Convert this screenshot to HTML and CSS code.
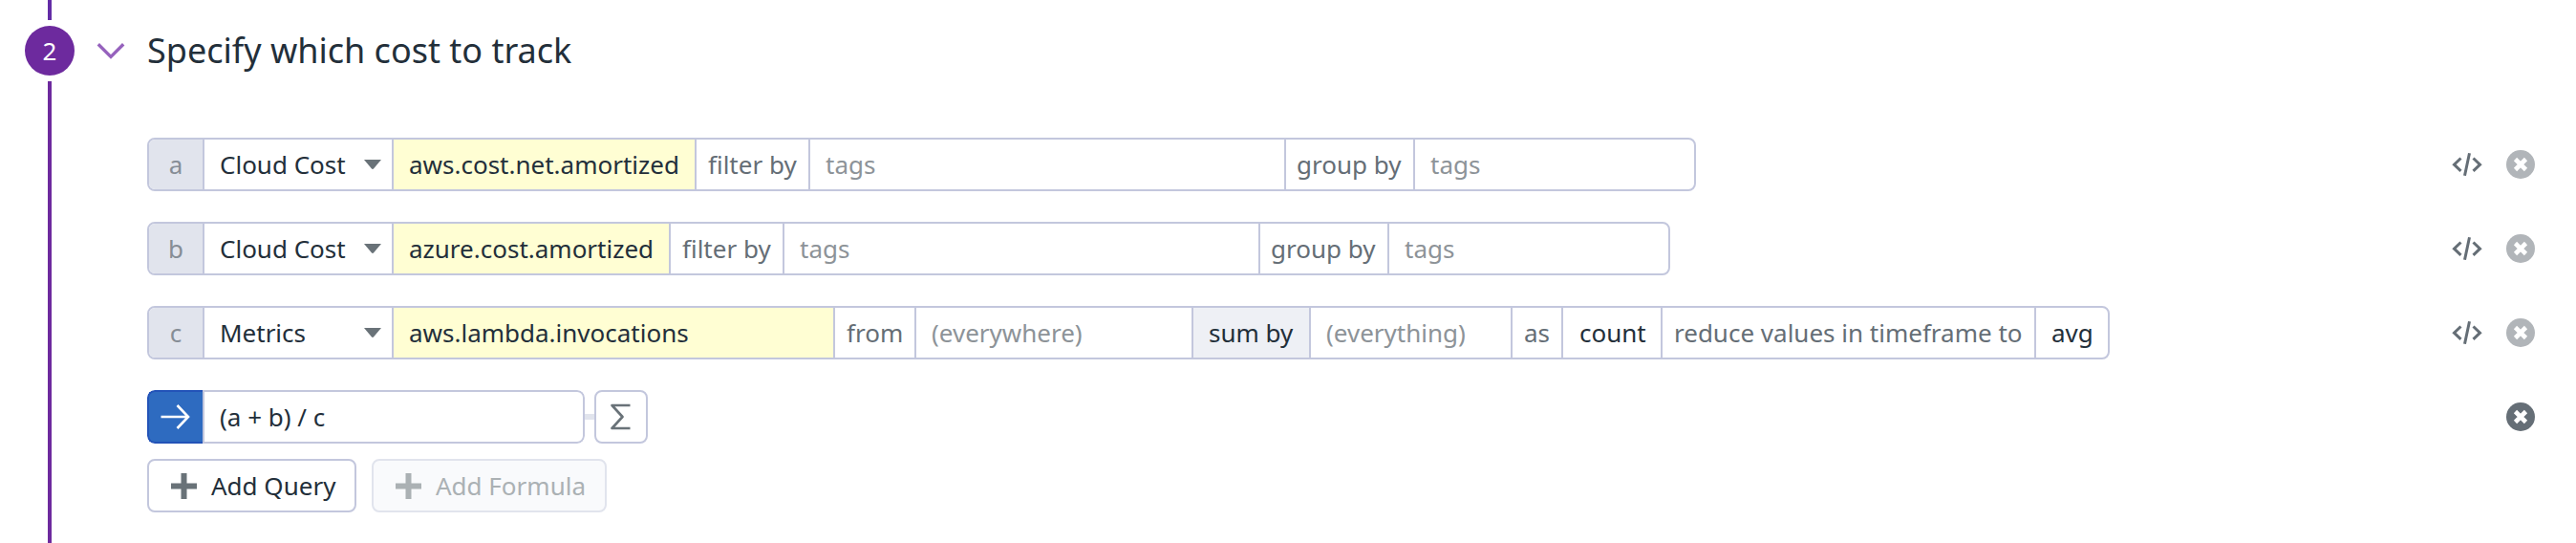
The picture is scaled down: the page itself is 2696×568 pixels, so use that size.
FILE: index.html
```html
<!DOCTYPE html>
<html lang="en">
<head>
<meta charset="utf-8">
<title>Specify which cost to track</title>
<link rel="stylesheet" href="styles.css">
</head>
<body>
<svg class="defs" width="0" height="0" aria-hidden="true">
  <symbol id="caret" viewBox="0 0 18 10"><path d="M0 0H18L10.2 9.3Q9 10.6 7.8 9.3Z" fill="currentColor"/></symbol>
  <symbol id="code" viewBox="0 0 32 24"><path d="M9.5 5.5 2.5 12.200l7 6.700M22.500 5.500l7 6.700-7 6.700M18.500.3l-5 23.400" fill="none" stroke="currentColor" stroke-width="3"/></symbol>
  <symbol id="remove" viewBox="0 0 30 30"><circle cx="15" cy="15" r="15" fill="currentColor"/><path d="M9.500 9.500l11 11M20.500 9.500l-11 11" stroke="#fff" stroke-width="4.600"/></symbol>
  <symbol id="plus" viewBox="0 0 27 27"><path d="M13.500 0v27M0 13.500h27" stroke="currentColor" stroke-width="6"/></symbol>
</svg>
<main class="step">
  <aside class="rail">
    <span class="rail-top"></span>
    <span class="number">2</span>
    <span class="rail-rest"></span>
  </aside>
  <section class="content">
    <header class="head">
      <svg class="chevron" viewBox="0 0 30 20"><path d="M1.800 3.200 15 16.400 28.200 3.200" fill="none" stroke="#9662bd" stroke-width="3.400"/></svg>
      <h2>Specify which cost to track</h2>
    </header>
    <div class="row">
      <div class="query">
        <span class="id">a</span>
        <span class="source">Cloud Cost<svg class="caret"><use href="#caret"/></svg></span>
        <span class="metric w-net">aws.cost.net.amortized</span>
        <span class="label w-filter">filter by</span>
        <span class="field w-tags">tags</span>
        <span class="label w-group">group by</span>
        <span class="field w-group-tags">tags</span>
      </div>
      <div class="actions"><svg class="code"><use href="#code"/></svg><svg class="remove"><use href="#remove"/></svg></div>
    </div>
    <div class="row">
      <div class="query">
        <span class="id">b</span>
        <span class="source">Cloud Cost<svg class="caret"><use href="#caret"/></svg></span>
        <span class="metric w-azure">azure.cost.amortized</span>
        <span class="label w-filter">filter by</span>
        <span class="field w-tags">tags</span>
        <span class="label w-group">group by</span>
        <span class="field w-group-tags">tags</span>
      </div>
      <div class="actions"><svg class="code"><use href="#code"/></svg><svg class="remove"><use href="#remove"/></svg></div>
    </div>
    <div class="row">
      <div class="query">
        <span class="id">c</span>
        <span class="source">Metrics<svg class="caret"><use href="#caret"/></svg></span>
        <span class="metric w-lambda">aws.lambda.invocations</span>
        <span class="label w-from">from</span>
        <span class="field w-where">(everywhere)</span>
        <span class="value shaded w-sum">sum by</span>
        <span class="field w-everything">(everything)</span>
        <span class="label w-as">as</span>
        <span class="value w-count">count</span>
        <span class="label w-reduce">reduce values in timeframe to</span>
        <span class="value w-avg">avg</span>
      </div>
      <div class="actions"><svg class="code"><use href="#code"/></svg><svg class="remove"><use href="#remove"/></svg></div>
    </div>
    <div class="row formula-row">
      <div class="formula">
        <span class="arrow"><svg viewBox="0 0 32 28"><path d="M.5 14h29M17.500 2 29 14 17.500 26" fill="none" stroke="#fff" stroke-width="2.600"/></svg></span>
        <span class="expression">(a + b) / c</span>
      </div>
      <span class="connector"></span>
      <button class="sigma" aria-label="Functions"><svg viewBox="0 0 22 28"><path d="M20.500 2H1.500L12.500 14 1.500 26H20.500" fill="none" stroke="currentColor" stroke-width="2.600" stroke-linejoin="round"/></svg></button>
      <div class="actions dark"><svg class="remove"><use href="#remove"/></svg></div>
    </div>
    <div class="buttons">
      <button class="add add-query"><svg><use href="#plus"/></svg>Add Query</button>
      <button class="add add-formula" disabled><svg><use href="#plus"/></svg>Add Formula</button>
    </div>
  </section>
</main>
</body>
</html>
```

FILE: styles.css
```css
* { box-sizing: border-box; }
body { margin: 0; background: #fff; color: #232f3a; font: 26px/36px "Noto Sans", sans-serif; }
.defs { display: block; }
svg { display: block; flex: none; }
.step { display: flex; height: 568px; overflow: hidden; }
.rail { width: 78px; padding-left: 26px; display: flex; flex-direction: column; align-items: center; flex: none; }
.rail-top { width: 4px; height: 21px; background: #632ca6; }
.number { width: 52px; height: 52px; margin: 6px 0; border-radius: 50%; background: #6d2a9e; color: #fff; display: flex; align-items: center; justify-content: center; }
.rail-rest { width: 4px; flex: 1; background: #6d2a9e; }
.content { flex: 1; padding-right: 43px; }
.head { display: flex; align-items: center; height: 106px; padding-left: 23px; margin-bottom: 38px; }
.chevron { width: 30px; height: 20px; }
h2 { margin: 0 0 0 23px; font-size: 36px; line-height: 50px; font-weight: 400; }
.row { display: flex; align-items: center; height: 56px; margin: 0 0 32px 76px; }
.query, .formula { display: flex; height: 56px; border: 2px solid #c3c7dd; border-radius: 8px; overflow: hidden; }
.query > span { display: flex; align-items: center; white-space: nowrap; flex: none; }
.query > span + span { border-left: 2px solid #c3c7dd; }
.query .id { width: 56px; justify-content: center; background: #e1e4ed; color: #868d96; }
.source { width: 198px; padding: 0 11px 0 16px; justify-content: space-between; }
.caret { width: 18px; height: 10px; color: #697278; }
.metric { padding-left: 16px; background: #fffed3; }
.label { padding-left: 12px; color: #656e76; }
.field { padding-left: 16px; color: #8d9398; }
.value { padding-left: 16px; }
.shaded { background: #eef0f5; }
.w-net { width: 317px; }
.w-azure { width: 290px; }
.w-lambda { width: 462px; }
.w-filter { width: 119px; }
.w-tags { width: 498px; }
.w-group { width: 135px; padding-left: 11px; }
.w-group-tags { width: 294px; }
.w-from { width: 85px; }
.w-where { width: 290px; }
.w-sum { width: 123px; }
.w-everything { width: 211px; }
.w-as { width: 53px; }
.w-count { width: 104px; padding-left: 17px; }
.w-reduce { width: 391px; }
.w-avg { width: 77px; }
.actions { margin-left: auto; display: flex; align-items: center; gap: 25px; color: #656e76; }
.code { width: 32px; height: 24px; }
.remove { width: 30px; height: 30px; color: #b1b5b9; }
.dark .remove { color: #656e76; }
.formula-row { margin-bottom: 16px; }
.formula { width: 458px; border: 0; }
.arrow { width: 58px; display: flex; align-items: center; justify-content: center; background: #2e6bc0; border: 2px solid #2353b8; border-right: 0; border-radius: 8px 0 0 8px; }
.arrow svg { width: 32px; height: 28px; }
.expression { flex: 1; border: 2px solid #c3c7dd; border-radius: 0 8px 8px 0; padding: 8px 16px; }
.connector { width: 10px; height: 6px; background: #e1e4ed; }
button { font: inherit; color: inherit; background: #fff; border: 2px solid #c3c7dd; border-radius: 8px; padding: 0; display: flex; align-items: center; }
.sigma { width: 56px; height: 56px; justify-content: center; color: #697278; }
.sigma svg { width: 22px; height: 28px; }
.buttons { display: flex; gap: 16px; margin-left: 76px; }
.add { height: 56px; padding-left: 23px; gap: 15px; white-space: nowrap; }
.add svg { width: 27px; height: 27px; color: #697278; }
.add-query { width: 219px; }
.add-formula { width: 246px; background: #f9fafc; border-color: #e1e4ed; color: #abb1b4; }
.add-formula svg { color: #abb1b4; }
```
